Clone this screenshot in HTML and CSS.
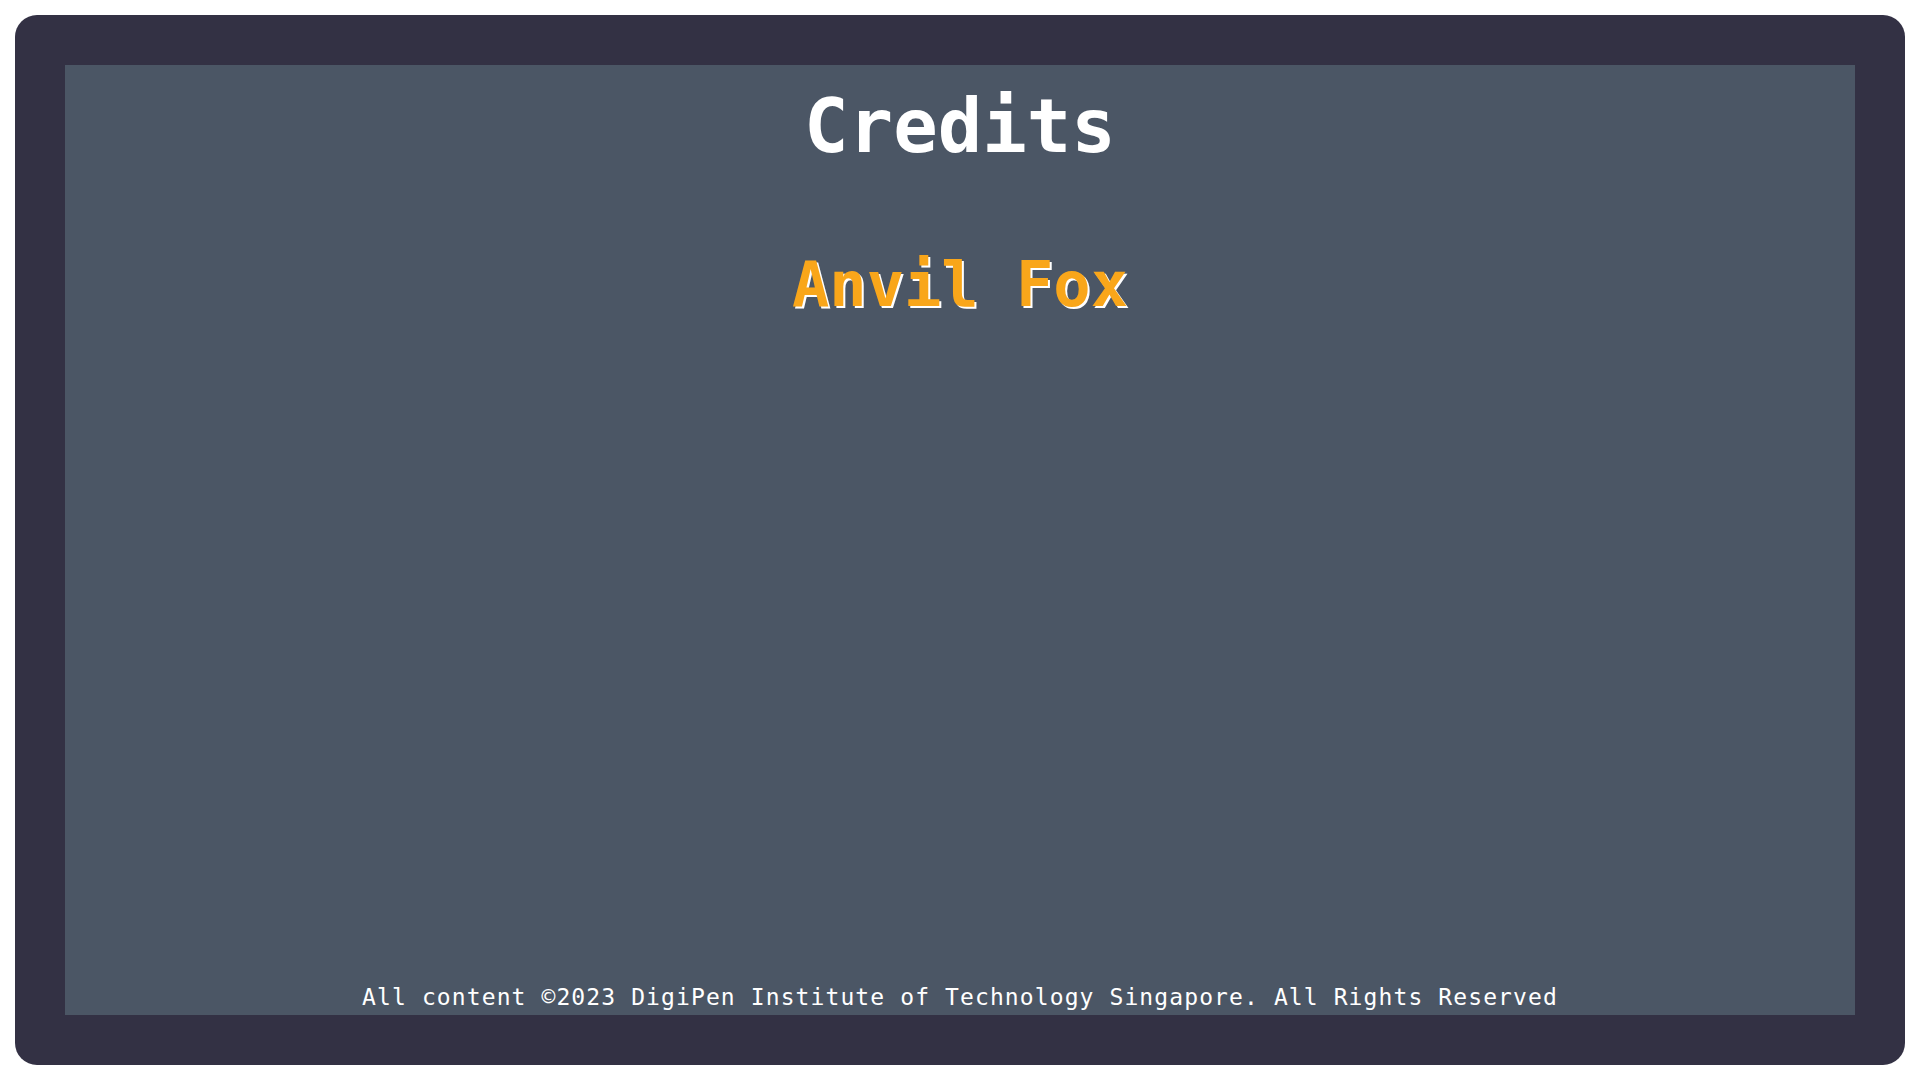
FILE: index.html
```html
<!DOCTYPE html>
<html lang="en">
<head>
<meta charset="utf-8">
<title>Credits</title>
<link rel="stylesheet" href="styles.css">
</head>
<body>
  <div class="frame">
    <main class="panel">
      <h1 class="title">Credits</h1>
      <h2 class="studio">Anvil Fox</h2>
      <footer class="footer">All content ©2023 DigiPen Institute of Technology Singapore. All Rights Reserved</footer>
    </main>
  </div>
</body>
</html>
```

FILE: styles.css
```css
html, body {
  margin: 0;
  padding: 0;
  background: #ffffff;
}
body {
  padding: 15px;
  box-sizing: border-box;
  width: 1920px;
  height: 1080px;
}
.frame {
  box-sizing: border-box;
  width: 1890px;
  height: 1050px;
  background: #333144;
  border-radius: 22px;
  padding: 50px;
}
.panel {
  box-sizing: border-box;
  height: 100%;
  background: #4b5665;
  display: flex;
  flex-direction: column;
  align-items: center;
  padding: 24px 0 6px;
  font-family: "DejaVu Sans Mono", "Liberation Mono", monospace;
}
.title {
  margin: 0;
  font-size: 74px;
  line-height: 1;
  font-weight: bold;
  color: #ffffff;
}
.studio {
  margin: 91px 0 0;
  font-size: 62px;
  line-height: 1;
  font-weight: bold;
  color: #f9a61a;
  text-shadow: 2px 2px 0 #ffffff;
}
.footer {
  margin-top: auto;
  font-size: 23px;
  line-height: 1;
  letter-spacing: 1.1px;
  color: #ffffff;
}
```
